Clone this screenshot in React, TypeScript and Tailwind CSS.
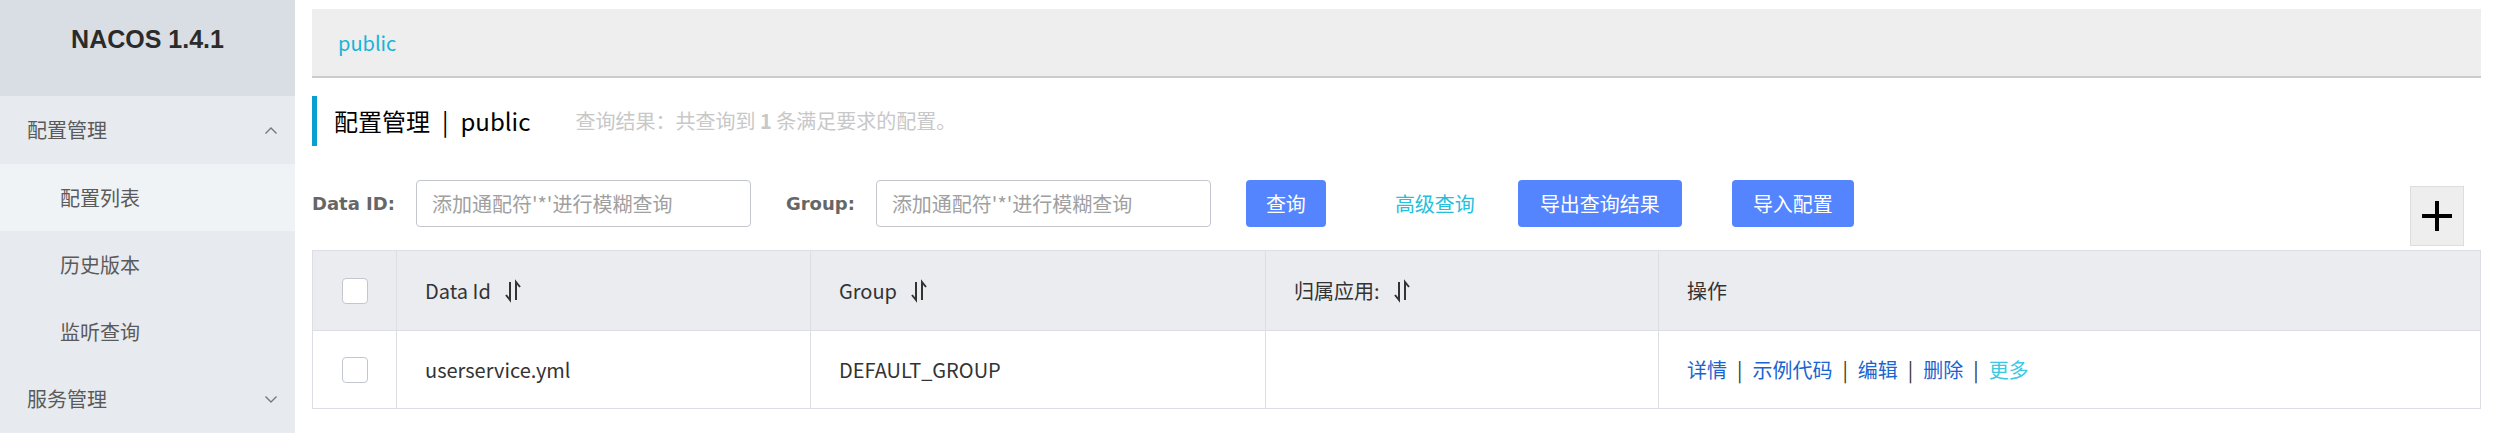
import React from 'react';

const SortIcon = () => (
  <svg width="18" height="24" viewBox="0 0 18 24" className="ml-[13px] shrink-0" fill="none" stroke="#333" strokeWidth="2">
    {/* down half-arrow */}
    <path d="M6 3 L6 21 L2 16" />
    {/* up half-arrow */}
    <path d="M12 21 L12 3 L16 8" />
  </svg>
);

const Chevron = ({ up }: { up?: boolean }) => (
  <svg width="14" height="9" viewBox="0 0 14 9" fill="none" stroke="#777" strokeWidth="1.4">
    {up ? <path d="M1.5 7.5 L7 2 L12.5 7.5" /> : <path d="M1.5 1.5 L7 7 L12.5 1.5" />}
  </svg>
);

const Checkbox = () => (
  <div className="w-[26px] h-[26px] rounded-[4px] border border-[#c4c6cf] bg-white" />
);

export default function App() {
  const cell = 'flex items-center pl-[28px] border-l border-[#dcdee3]';

  return (
    <div className="flex w-[2495px] h-[433px] overflow-hidden bg-white font-['Noto_Sans_CJK_SC',sans-serif]">
      {/* Sidebar */}
      <aside className="w-[295px] shrink-0 flex flex-col bg-[#e7ebf0] text-[20px] text-[#5a5a5a]">
        <div className="h-[96px] shrink-0 bg-[#d9dee4] flex justify-center pt-[22px]">
          <span className="font-['Liberation_Sans',sans-serif] font-bold text-[25px] text-[#2b2b2b] leading-[34px]">
            NACOS 1.4.1
          </span>
        </div>
        <div className="h-[68px] flex items-center justify-between pl-[27px] pr-[17px]">
          <span>配置管理</span>
          <Chevron up />
        </div>
        <div className="h-[67px] flex items-center pl-[60px] bg-[#f0f3f6]">配置列表</div>
        <div className="h-[67px] flex items-center pl-[60px]">历史版本</div>
        <div className="h-[67px] flex items-center pl-[60px]">监听查询</div>
        <div className="h-[68px] flex items-center justify-between pl-[27px] pr-[17px]">
          <span>服务管理</span>
          <Chevron />
        </div>
      </aside>

      {/* Main */}
      <main className="flex-1 min-w-0 pl-[17px] pr-[14px]">
        {/* namespace bar */}
        <div className="mt-[9px] h-[69px] bg-[#eeeeee] border-b-2 border-[#cccccc] flex items-center pl-[26px]">
          <span className="text-[20px] text-[#17b3d8]">public</span>
        </div>

        {/* title */}
        <div className="mt-[18px] h-[50px] border-l-[5px] border-[#0a9fd0] pl-[17px] flex items-center">
          <span className="text-[24px] text-black">配置管理</span>
          <span className="text-[24px] text-black mx-[12px]">|</span>
          <span className="text-[24px] text-black">public</span>
          <span className="ml-[45px] text-[20px] text-[#c8c8c8]">
            查询结果：共查询到 <b className="font-bold">1</b> 条满足要求的配置。
          </span>
        </div>

        {/* search row */}
        <div className="mt-[34px] flex items-start">
          <div className="h-[47px] flex items-center">
            <span className="font-['DejaVu_Sans',sans-serif] font-bold text-[18px] text-[#666]">Data ID:</span>
            <div className="ml-[21px] w-[335px] h-[47px] border border-[#c4c6cf] rounded-[4px] flex items-center pl-[15px] text-[20px] text-[#a0a0a0]">
              添加通配符'*'进行模糊查询
            </div>
            <span className="ml-[35px] font-['DejaVu_Sans',sans-serif] font-bold text-[18px] text-[#666]">Group:</span>
            <div className="ml-[21px] w-[335px] h-[47px] border border-[#c4c6cf] rounded-[4px] flex items-center pl-[15px] text-[20px] text-[#a0a0a0]">
              添加通配符'*'进行模糊查询
            </div>
            <button className="ml-[35px] h-[47px] px-[20px] rounded-[4px] bg-[#5584ff] text-white text-[20px]">查询</button>
            <span className="ml-[69px] text-[20px] text-[#25bfdb]">高级查询</span>
            <button className="ml-[43px] h-[47px] px-[22px] rounded-[4px] bg-[#5584ff] text-white text-[20px]">导出查询结果</button>
            <button className="ml-[50px] h-[47px] px-[21px] rounded-[4px] bg-[#5584ff] text-white text-[20px]">导入配置</button>
          </div>
          <button className="ml-auto mr-[17px] mt-[6px] w-[54px] h-[60px] bg-[#eeeeee] border border-[#dddddd] flex items-center justify-center">
            <svg width="32" height="32" viewBox="0 0 32 32" stroke="#000" strokeWidth="4">
              <path d="M16 1 V31 M1 16 H31" />
            </svg>
          </button>
        </div>

        {/* table */}
        <div className="mt-[4px] border border-[#dcdee3] text-[20px] text-[#333]">
          <div className="grid grid-cols-[83px_414px_455px_393px_1fr] h-[80px] bg-[#ebecf0] border-b border-[#dcdee3]">
            <div className="flex items-center justify-center"><Checkbox /></div>
            <div className={cell}>Data Id<SortIcon /></div>
            <div className={cell}>Group<SortIcon /></div>
            <div className={cell}>归属应用:<SortIcon /></div>
            <div className={cell}>操作</div>
          </div>
          <div className="grid grid-cols-[83px_414px_455px_393px_1fr] h-[77px] bg-white">
            <div className="flex items-center justify-center"><Checkbox /></div>
            <div className={cell}>userservice.yml</div>
            <div className={cell}>DEFAULT_GROUP</div>
            <div className={cell}></div>
            <div className={cell}>
              <span className="text-[#1a64d0]">详情</span>
              <span className="mx-[10px] text-[#333]">|</span>
              <span className="text-[#1a64d0]">示例代码</span>
              <span className="mx-[10px] text-[#333]">|</span>
              <span className="text-[#1a64d0]">编辑</span>
              <span className="mx-[10px] text-[#333]">|</span>
              <span className="text-[#1a64d0]">删除</span>
              <span className="mx-[10px] text-[#333]">|</span>
              <span className="text-[#3cc8e3]">更多</span>
            </div>
          </div>
        </div>
      </main>
    </div>
  );
}
